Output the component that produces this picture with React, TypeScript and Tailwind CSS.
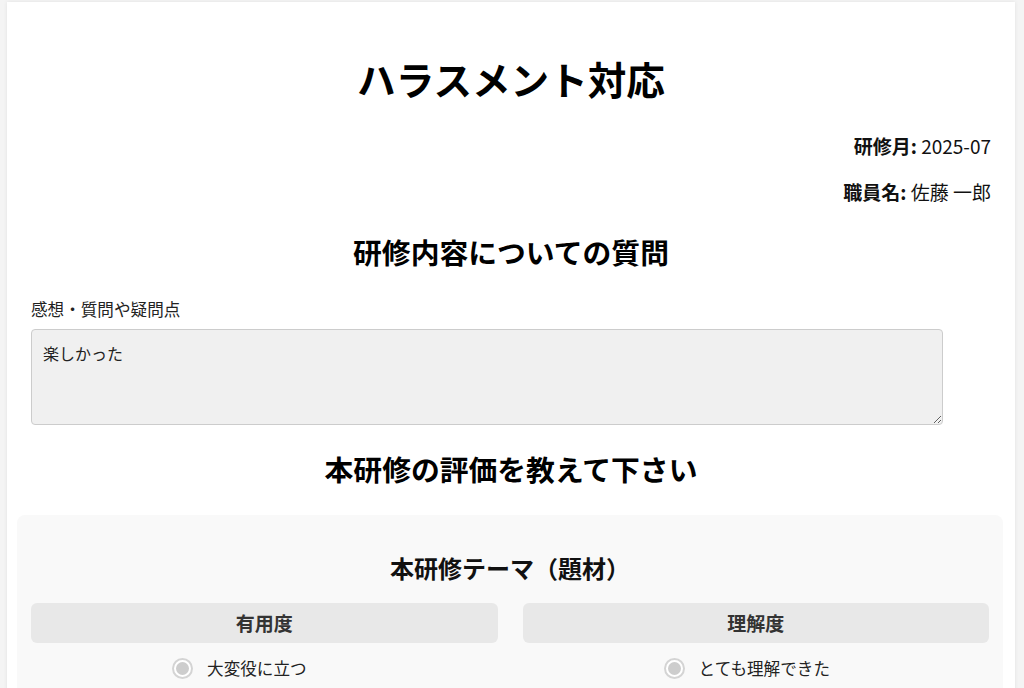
const font = { fontFamily: '"Noto Sans CJK JP", "Noto Sans", sans-serif' }

const usefulness = ['大変役に立つ', '役に立つ', 'あまり役に立たない', '役に立たない']
const understanding = ['とても理解できた', '理解できた', 'あまり理解できない', '理解できなかった']

function RadioDot() {
  return (
    <span className="flex h-[21px] w-[21px] shrink-0 items-center justify-center rounded-full border-2 border-[#d4d4d4] bg-white">
      <span className="h-[13px] w-[13px] rounded-full bg-[#cdcdcd]" />
    </span>
  )
}

function RatingColumn({ title, options }: { title: string; options: string[] }) {
  return (
    <div className="flex flex-col">
      <div className="flex h-[40px] items-center justify-center rounded-[6px] bg-[#e8e8e8] text-[19px] font-bold text-[#333]">
        {title}
      </div>
      <div className="mx-auto mt-[13px] flex flex-col gap-[12px]">
        {options.map((opt) => (
          <label key={opt} className="flex h-[24px] items-center gap-[14px] text-[16.6px] text-[#222]">
            <RadioDot />
            <span>{opt}</span>
          </label>
        ))}
      </div>
    </div>
  )
}

export default function App() {
  return (
    <div className="min-h-screen bg-[#f4f4f4] px-[7px] pt-[2px] pr-[9px]" style={font}>
      <div className="min-h-[700px] bg-white px-[10px] pt-[48px] pb-10 shadow-[0_0_4px_rgba(0,0,0,0.08)]">
        {/* Title */}
        <h1 className="text-center text-[38.6px] font-bold leading-[56px] text-black">ハラスメント対応</h1>

        {/* Meta */}
        <div className="px-[14px] text-right text-[19px] leading-[24px] text-[#111]">
          <p className="mt-[28px]">
            <span className="font-bold">研修月:</span> 2025-07
          </p>
          <p className="mt-[22px]">
            <span className="font-bold">職員名:</span> 佐藤 一郎
          </p>
        </div>

        {/* Questions */}
        <h2 className="mt-[28px] text-center text-[28.8px] font-bold leading-[40px] text-black">
          研修内容についての質問
        </h2>
        <div className="px-[14px]">
          <p className="mt-[26px] text-[16.6px] leading-[22px] text-[#222]">感想・質問や疑問点</p>
          <textarea
            readOnly
            defaultValue="楽しかった"
            className="mt-[9px] block h-[96px] w-[95%] rounded-[4px] border border-[#cccccc] bg-[#f0f0f0] px-[11px] py-[11px] text-[16px] leading-[24px] text-[#222] outline-none"
            style={font}
          />
        </div>

        {/* Evaluation */}
        <h2 className="mt-[24px] text-center text-[28.8px] font-bold leading-[40px] text-black">
          本研修の評価を教えて下さい
        </h2>
        <div className="mt-[26px] mr-[2px] rounded-[8px] bg-[#f9f9f9] px-[14px] pt-[37px] pb-6">
          <h3 className="text-center text-[24px] font-bold leading-[32px] text-[#111]">本研修テーマ（題材）</h3>
          <div className="mt-[19px] grid grid-cols-2 gap-[25px]">
            <RatingColumn title="有用度" options={usefulness} />
            <RatingColumn title="理解度" options={understanding} />
          </div>
        </div>
      </div>
    </div>
  )
}
